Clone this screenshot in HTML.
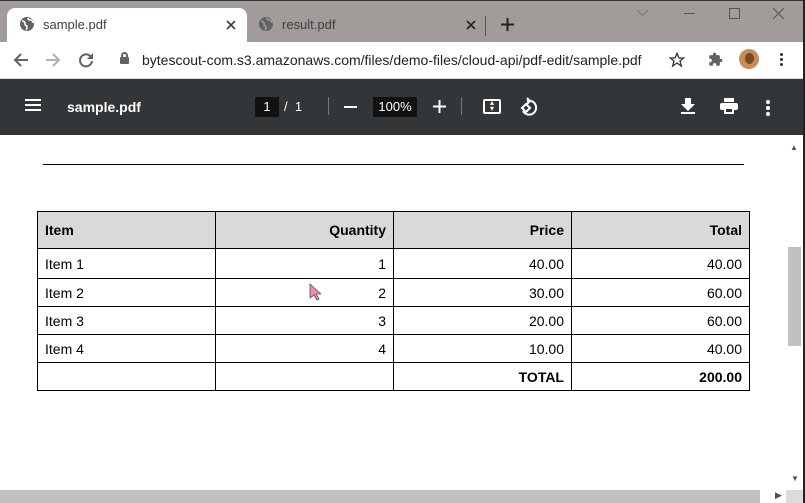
<!DOCTYPE html>
<html><head><style>
*{margin:0;padding:0;box-sizing:border-box}
body{width:805px;height:503px;overflow:hidden;position:relative;background:#fff;font-family:"Liberation Sans",Arial,sans-serif}
.a{position:absolute}
.tabs{left:0;top:0;width:805px;height:42px;background:#a19b9a;border-top:1px solid #333}
.tab{left:7px;top:8px;width:240px;height:34px;background:#fff;border-radius:8px 8px 0 0}
.t{font-size:13px;color:#3c4043}
.bar{left:0;top:42px;width:805px;height:37px;background:#fff}
.pdf{left:0;top:79px;width:805px;height:56px;background:#323639;color:#fff}
table{position:absolute;left:37px;top:211px;border-collapse:collapse;font-size:14px;color:#000}
td{border:1px solid #000;width:178px;padding:0 7px;height:28px}
tr.h td{background:#d9d9d9;font-weight:bold;height:37px}
tr.f td{height:30px}
.r{text-align:right}
</style></head><body>
<div class="a tabs"></div>
<div class="a tab"></div>
<svg class="a" style="left:19px;top:16px" width="16" height="16" viewBox="0 0 16 16"><circle cx="8" cy="8" r="7" fill="#5f6368"/><path d="M3 5c2 0 3 1 3 3s2 1 2 3-1 3-1 3M9 2c0 2 2 2 3 2s2 2 2 3" stroke="#fff" stroke-width="1.6" fill="none"/></svg>
<div class="a t" style="left:43px;top:17px">sample.pdf</div>
<svg class="a" style="left:226px;top:20px" width="10" height="10" viewBox="0 0 10 10" stroke="#3c4043" stroke-width="1.6"><path d="M1 1l8 8M9 1l-8 8"/></svg>
<svg class="a" style="left:258px;top:16px" width="16" height="16" viewBox="0 0 16 16"><circle cx="8" cy="8" r="7" fill="#5f6368"/><path d="M3 5c2 0 3 1 3 3s2 1 2 3-1 3-1 3M9 2c0 2 2 2 3 2s2 2 2 3" stroke="#a19b9a" stroke-width="1.6" fill="none"/></svg>
<div class="a t" style="left:282px;top:17px">result.pdf</div>
<svg class="a" style="left:466px;top:20px" width="10" height="10" viewBox="0 0 10 10" stroke="#222" stroke-width="1.6"><path d="M1 1l8 8M9 1l-8 8"/></svg>
<div class="a" style="left:485px;top:16px;width:1px;height:20px;background:#555"></div>
<svg class="a" style="left:501px;top:18px" width="13" height="13" viewBox="0 0 13 13" stroke="#222" stroke-width="2"><path d="M6.5 0v13M0 6.5h13"/></svg>
<svg class="a" style="left:637px;top:10px" width="11" height="6" viewBox="0 0 11 6" stroke="#777" fill="none"><path d="M0 0l5.5 5.5L11 0"/></svg>
<div class="a" style="left:684px;top:13px;width:11px;height:1px;background:#555"></div>
<div class="a" style="left:729px;top:8px;width:11px;height:11px;border:1px solid #555"></div>
<svg class="a" style="left:773px;top:8px" width="11" height="11" viewBox="0 0 11 11" stroke="#555"><path d="M0 0l11 11M11 0L0 11"/></svg>
<div class="a bar"></div>
<svg class="a" style="left:13px;top:52px" width="16" height="16" viewBox="0 0 16 16" stroke="#5f6368" stroke-width="2" fill="none"><path d="M15 8H2M8 2L2 8l6 6"/></svg>
<svg class="a" style="left:45px;top:52px" width="16" height="16" viewBox="0 0 16 16" stroke="#b0b0b0" stroke-width="2" fill="none"><path d="M1 8h13M8 2l6 6-6 6"/></svg>
<svg class="a" style="left:78px;top:52px" width="16" height="16" viewBox="0 0 16 16" fill="none"><path d="M13 5A6 6 0 1 0 14 9" stroke="#5f6368" stroke-width="2"/><path d="M15 1v6H9z" fill="#5f6368"/></svg>
<div class="a" style="left:120px;top:57px;width:9px;height:7px;background:#5f6368;border-radius:1px"></div>
<div class="a" style="left:121px;top:52px;width:7px;height:7px;border:2px solid #5f6368;border-bottom:none;border-radius:4px 4px 0 0"></div>
<div class="a" style="left:142px;top:52px;font-size:14px;color:#202124">bytescout-com.s3.amazonaws.com/files/demo-files/cloud-api/pdf-edit/sample.pdf</div>
<svg class="a" style="left:669px;top:52px" width="16" height="16" viewBox="0 0 24 24" fill="none" stroke="#333" stroke-width="2"><path d="M12 2l3 7h7l-5.5 4.5 2 7.5L12 16.5 5.5 21l2-7.5L2 9h7z"/></svg>
<svg class="a" style="left:708px;top:52px" width="15" height="15" viewBox="0 0 24 24" fill="#5f6368"><path d="M20.5 11H19V7c0-1.1-.9-2-2-2h-4V3.5a2.5 2.5 0 0 0-5 0V5H4c-1.1 0-2 .9-2 2v3.8h1.5a2.7 2.7 0 0 1 0 5.4H2V20c0 1.1.9 2 2 2h3.8v-1.5a2.7 2.7 0 0 1 5.4 0V22H17c1.1 0 2-.9 2-2v-4h1.5a2.5 2.5 0 0 0 0-5z"/></svg>
<div class="a" style="left:739px;top:49px;width:20px;height:20px;border-radius:50%;background:#c98b5a"></div>
<div class="a" style="left:745px;top:53px;width:9px;height:11px;border-radius:50%;background:#7a4a2a"></div>
<div class="a" style="left:780px;top:53px;width:3px;height:3px;background:#333;border-radius:50%;box-shadow:0 5px #333,0 10px #333"></div>
<div class="a" style="left:0;top:78px;width:805px;height:1px;background:#ddd"></div>
<div class="a pdf"></div>
<div class="a" style="left:25px;top:99px;width:16px;height:2px;background:#fff;box-shadow:0 5px #fff,0 10px #fff"></div>
<div class="a" style="left:67px;top:99px;font-size:14px;font-weight:bold;color:#fff">sample.pdf</div>
<div class="a" style="left:255px;top:97px;width:24px;height:20px;background:#111;color:#fff;font-size:13px;text-align:center;line-height:20px">1</div>
<div class="a" style="left:284px;top:99px;font-size:13px;color:#fff">/&nbsp; 1</div>
<div class="a" style="left:328px;top:97px;width:1px;height:18px;background:#777"></div>
<div class="a" style="left:344px;top:106px;width:13px;height:2px;background:#fff"></div>
<div class="a" style="left:373px;top:97px;width:44px;height:20px;background:#111;color:#fff;font-size:13px;text-align:center;line-height:20px">100%</div>
<svg class="a" style="left:433px;top:100px" width="13" height="13" viewBox="0 0 13 13" stroke="#fff" stroke-width="2"><path d="M6.5 0v13M0 6.5h13"/></svg>
<div class="a" style="left:461px;top:97px;width:1px;height:18px;background:#777"></div>
<div class="a" style="left:483px;top:99px;width:18px;height:15px;border:2px solid #fff;border-radius:2px"></div>
<div class="a" style="left:490px;top:100px;font-size:8px;color:#fff;line-height:6px">▴<br>▾</div>
<svg class="a" style="left:519px;top:97px" width="20" height="20" viewBox="0 0 20 20" fill="none" stroke="#fff" stroke-width="2"><path d="M8 4a7 7 0 1 1-4 10"/><path d="M3 11l4-4 4 4-4 4z"/><path d="M8 1l3 3-3 3" /></svg>
<svg class="a" style="left:681px;top:98px" width="14" height="16" viewBox="0 0 14 16" fill="#fff"><path d="M4 0h6v6h4l-7 7-7-7h4z"/><rect x="0" y="14" width="14" height="2"/></svg>
<svg class="a" style="left:720px;top:98px" width="18" height="16" viewBox="0 0 18 16" fill="#fff"><rect x="4" y="0" width="10" height="4"/><rect x="0" y="5" width="18" height="7" rx="2"/><rect x="4" y="9" width="10" height="7"/><rect x="6" y="11" width="6" height="3" fill="#323639"/></svg>
<div class="a" style="left:766px;top:100px;width:4px;height:4px;background:#fff;border-radius:50%;box-shadow:0 6px #fff,0 12px #fff"></div>
<div class="a" style="left:43px;top:164px;width:701px;height:1px;background:#000"></div>
<table>
<tr class="h"><td>Item</td><td class="r">Quantity</td><td class="r">Price</td><td class="r">Total</td></tr>
<tr class="f"><td>Item 1</td><td class="r">1</td><td class="r">40.00</td><td class="r">40.00</td></tr>
<tr><td>Item 2</td><td class="r">2</td><td class="r">30.00</td><td class="r">60.00</td></tr>
<tr><td>Item 3</td><td class="r">3</td><td class="r">20.00</td><td class="r">60.00</td></tr>
<tr><td>Item 4</td><td class="r">4</td><td class="r">10.00</td><td class="r">40.00</td></tr>
<tr><td></td><td></td><td class="r"><b>TOTAL</b></td><td class="r"><b>200.00</b></td></tr>
</table>
<svg class="a" style="left:309px;top:283px" width="12" height="18" viewBox="0 0 12 18"><path d="M1 1v14l4-3 3 5 2-1-3-5h5z" fill="#f08ca0" stroke="#555" stroke-width="0.8"/></svg>
<div class="a" style="left:787px;top:135px;width:16px;height:355px;background:#fff"></div>
<div class="a" style="left:790px;top:143px;font-size:8px;color:#505050">▲</div>
<div class="a" style="left:788px;top:247px;width:13px;height:99px;background:#c1c1c1"></div>
<div class="a" style="left:791px;top:474px;font-size:8px;color:#505050">▼</div>
<div class="a" style="left:0;top:490px;width:787px;height:13px;background:#fff"></div>
<div class="a" style="left:0;top:490px;width:760px;height:13px;background:#c1c1c1"></div>
<div class="a" style="left:775px;top:490px;font-size:9px;color:#505050">▶</div>
<div class="a" style="left:786px;top:490px;width:17px;height:13px;background:#dcdcdc"></div>
<div class="a" style="left:803px;top:0;width:2px;height:503px;background:#222"></div>
</body></html>
